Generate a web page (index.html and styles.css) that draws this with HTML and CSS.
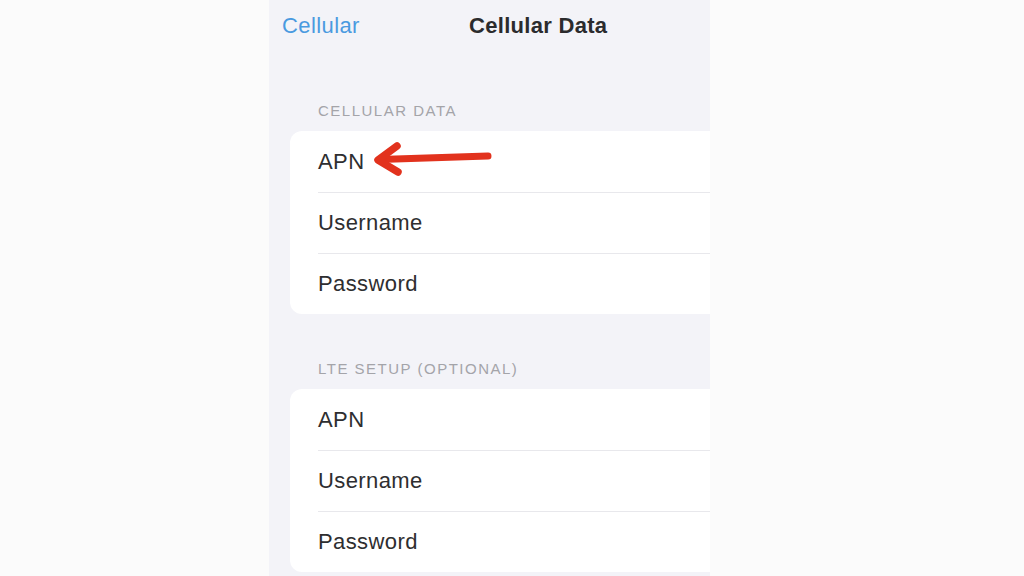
FILE: index.html
```html
<!DOCTYPE html>
<html>
<head>
<meta charset="utf-8">
<link rel="stylesheet" href="styles.css">
</head>
<body>
<div class="page">
  <div class="phone">
    <div class="nav">
      <span class="back">Cellular</span>
      <span class="title">Cellular Data</span>
    </div>
    <div class="section first">
      <div class="header">CELLULAR DATA</div>
      <div class="card">
        <div class="row">APN</div>
        <div class="row">Username</div>
        <div class="row">Password</div>
      </div>
    </div>
    <div class="section second">
      <div class="header">LTE SETUP (OPTIONAL)</div>
      <div class="card">
        <div class="row">APN</div>
        <div class="row">Username</div>
        <div class="row">Password</div>
      </div>
    </div>
    <svg class="arrow" width="126" height="42" viewBox="0 0 126 42">
      <path d="M118 18 L10 21.5" fill="none" stroke="#e2321d" stroke-width="7" stroke-linecap="round"/>
      <path d="M27 8 L8 22 L28 34" fill="none" stroke="#e2321d" stroke-width="7.5" stroke-linecap="round" stroke-linejoin="round"/>
    </svg>
  </div>
</div>
</body>
</html>
```
FILE: styles.css
```css
html, body {
  margin: 0;
  padding: 0;
  background: #fbfbfb;
  font-family: "Liberation Sans", Arial, sans-serif;
}
.page {
  width: 1024px;
  height: 576px;
  overflow: hidden;
  display: flex;
}
.phone {
  position: relative;
  margin-left: 269px;
  width: 441px;
  height: 576px;
  background: #f3f3f8;
  overflow: hidden;
  display: flex;
  flex-direction: column;
}
.nav {
  position: relative;
  height: 50px;
  flex: none;
  display: flex;
  align-items: center;
}
.back {
  margin-left: 13px;
  margin-top: 2px;
  font-size: 22px;
  letter-spacing: 0.4px;
  color: #4a9ae0;
}
.title {
  position: absolute;
  left: 200px;
  top: 14px;
  font-size: 22px;
  font-weight: bold;
  letter-spacing: 0.3px;
  color: #2b2b2d;
  line-height: 24px;
}
.section {
  display: flex;
  flex-direction: column;
}
.section.first {
  margin-top: 50px;
}
.section.second {
  margin-top: 44px;
}
.header {
  margin-left: 49px;
  font-size: 15px;
  line-height: 22px;
  letter-spacing: 1.5px;
  color: #a4a4a9;
  margin-bottom: 9px;
}
.card {
  margin-left: 21px;
  width: 440px;
  background: #ffffff;
  border-radius: 12px;
  display: flex;
  flex-direction: column;
}
.row {
  height: 61px;
  display: flex;
  align-items: center;
  padding-left: 28px;
  font-size: 22px;
  letter-spacing: 0.4px;
  color: #2e2e30;
  box-sizing: border-box;
}
.row + .row {
  border-top: 1px solid #e8e8ec;
  margin-left: 28px;
  padding-left: 0;
}
.arrow {
  position: absolute;
  left: 101px;
  top: 138px;
}
```
